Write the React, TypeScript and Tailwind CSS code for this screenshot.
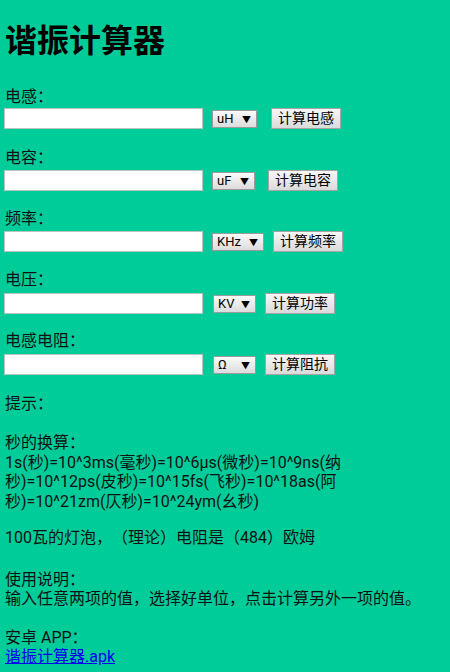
import React from "react";

const font = { fontFamily: "Roboto, 'Noto Sans CJK SC', sans-serif" };

function Sel({ label, w }: { label: string; w: string }) {
  return (
    <div className={`relative h-[18px] ${w} border border-[#9a9a9a] bg-gradient-to-b from-[#fafafa] to-[#dcdcdc] flex items-center`}>
      <span className="pl-[4px] text-[13px] leading-[16px] text-black">{label}</span>
      <span className="absolute right-[5px] top-[1px] text-[9px] leading-[16px] text-black">▼</span>
    </div>
  );
}

function Btn({ label, w }: { label: string; w: string }) {
  return (
    <button className={`h-[21px] ${w} border border-[#a5a5a5] bg-gradient-to-b from-[#f7f7f7] to-[#dadada] text-[14px] leading-[19px] text-black flex items-center justify-center`}>
      {label}
    </button>
  );
}

function Row({ unit, selW, btn, gap1, gap2, btnW }: { unit: string; selW: string; btn: string; gap1: string; gap2: string; btnW: string }) {
  return (
    <div className="flex items-center h-[21px]">
      <input className="h-[21px] w-[199px] -ml-[1px] bg-white border border-[#b8c4be] outline-none" />
      <div className={gap1} />
      <Sel label={unit} w={selW} />
      <div className={gap2} />
      <Btn label={btn} w={btnW} />
    </div>
  );
}

export default function App() {
  return (
    <div className="min-h-[672px] w-[450px] bg-[#00cc99] text-[#111] px-[5px] pb-[10px] text-[16px] leading-[19.5px] [text-spacing-trim:space-all]" style={font}>
      <div className="pt-[25px] h-[58px] text-[32px] leading-[33px] font-bold text-black">谐振计算器</div>

      <div className="mt-[29px] h-[20px] leading-[20px]">电感：</div>
      <div className="mt-[1px]"><Row unit="uH" selW="w-[45px]" btn="计算电感" gap1="w-[9px]" gap2="w-[14px]" btnW="w-[70px]" /></div>

      <div className="mt-[19px] h-[20px] leading-[20px]">电容：</div>
      <div className="mt-[2px]"><Row unit="uF" selW="w-[43px]" btn="计算电容" gap1="w-[9px]" gap2="w-[13px]" btnW="w-[70px]" /></div>

      <div className="mt-[18px] h-[20px] leading-[20px]">频率：</div>
      <div className="mt-[2px]"><Row unit="KHz" selW="w-[52px]" btn="计算频率" gap1="w-[9px]" gap2="w-[9px]" btnW="w-[70px]" /></div>

      <div className="mt-[18px] h-[20px] leading-[20px]">电压：</div>
      <div className="mt-[3px]"><Row unit="KV" selW="w-[43px]" btn="计算功率" gap1="w-[10px]" gap2="w-[9px]" btnW="w-[70px]" /></div>

      <div className="mt-[17px] h-[20px] leading-[20px]">电感电阻：</div>
      <div className="mt-[3px]"><Row unit="Ω" selW="w-[43px]" btn="计算阻抗" gap1="w-[10px]" gap2="w-[9px]" btnW="w-[70px]" /></div>

      <div className="mt-[19px] h-[20px] leading-[20px]">提示：</div>

      <div className="mt-[19px]">
        <div>秒的换算：</div>
        <div>1s(秒)=10^3ms(毫秒)=10^6μs(微秒)=10^9ns(纳秒)=10^12ps(皮秒)=10^15fs(飞秒)=10^18as(阿秒)=10^21zm(仄秒)=10^24ym(幺秒)</div>
      </div>

      <div className="mt-[17px]">100瓦的灯泡，（理论）电阻是（484）欧姆</div>

      <div className="mt-[22px]">
        <div>使用说明：</div>
        <div>输入任意两项的值，选择好单位，点击计算另外一项的值。</div>
      </div>

      <div className="mt-[19px]">
        <div>安卓 APP：</div>
        <a href="#" className="text-[#0000ee] underline">谐振计算器.apk</a>
      </div>
    </div>
  );
}
